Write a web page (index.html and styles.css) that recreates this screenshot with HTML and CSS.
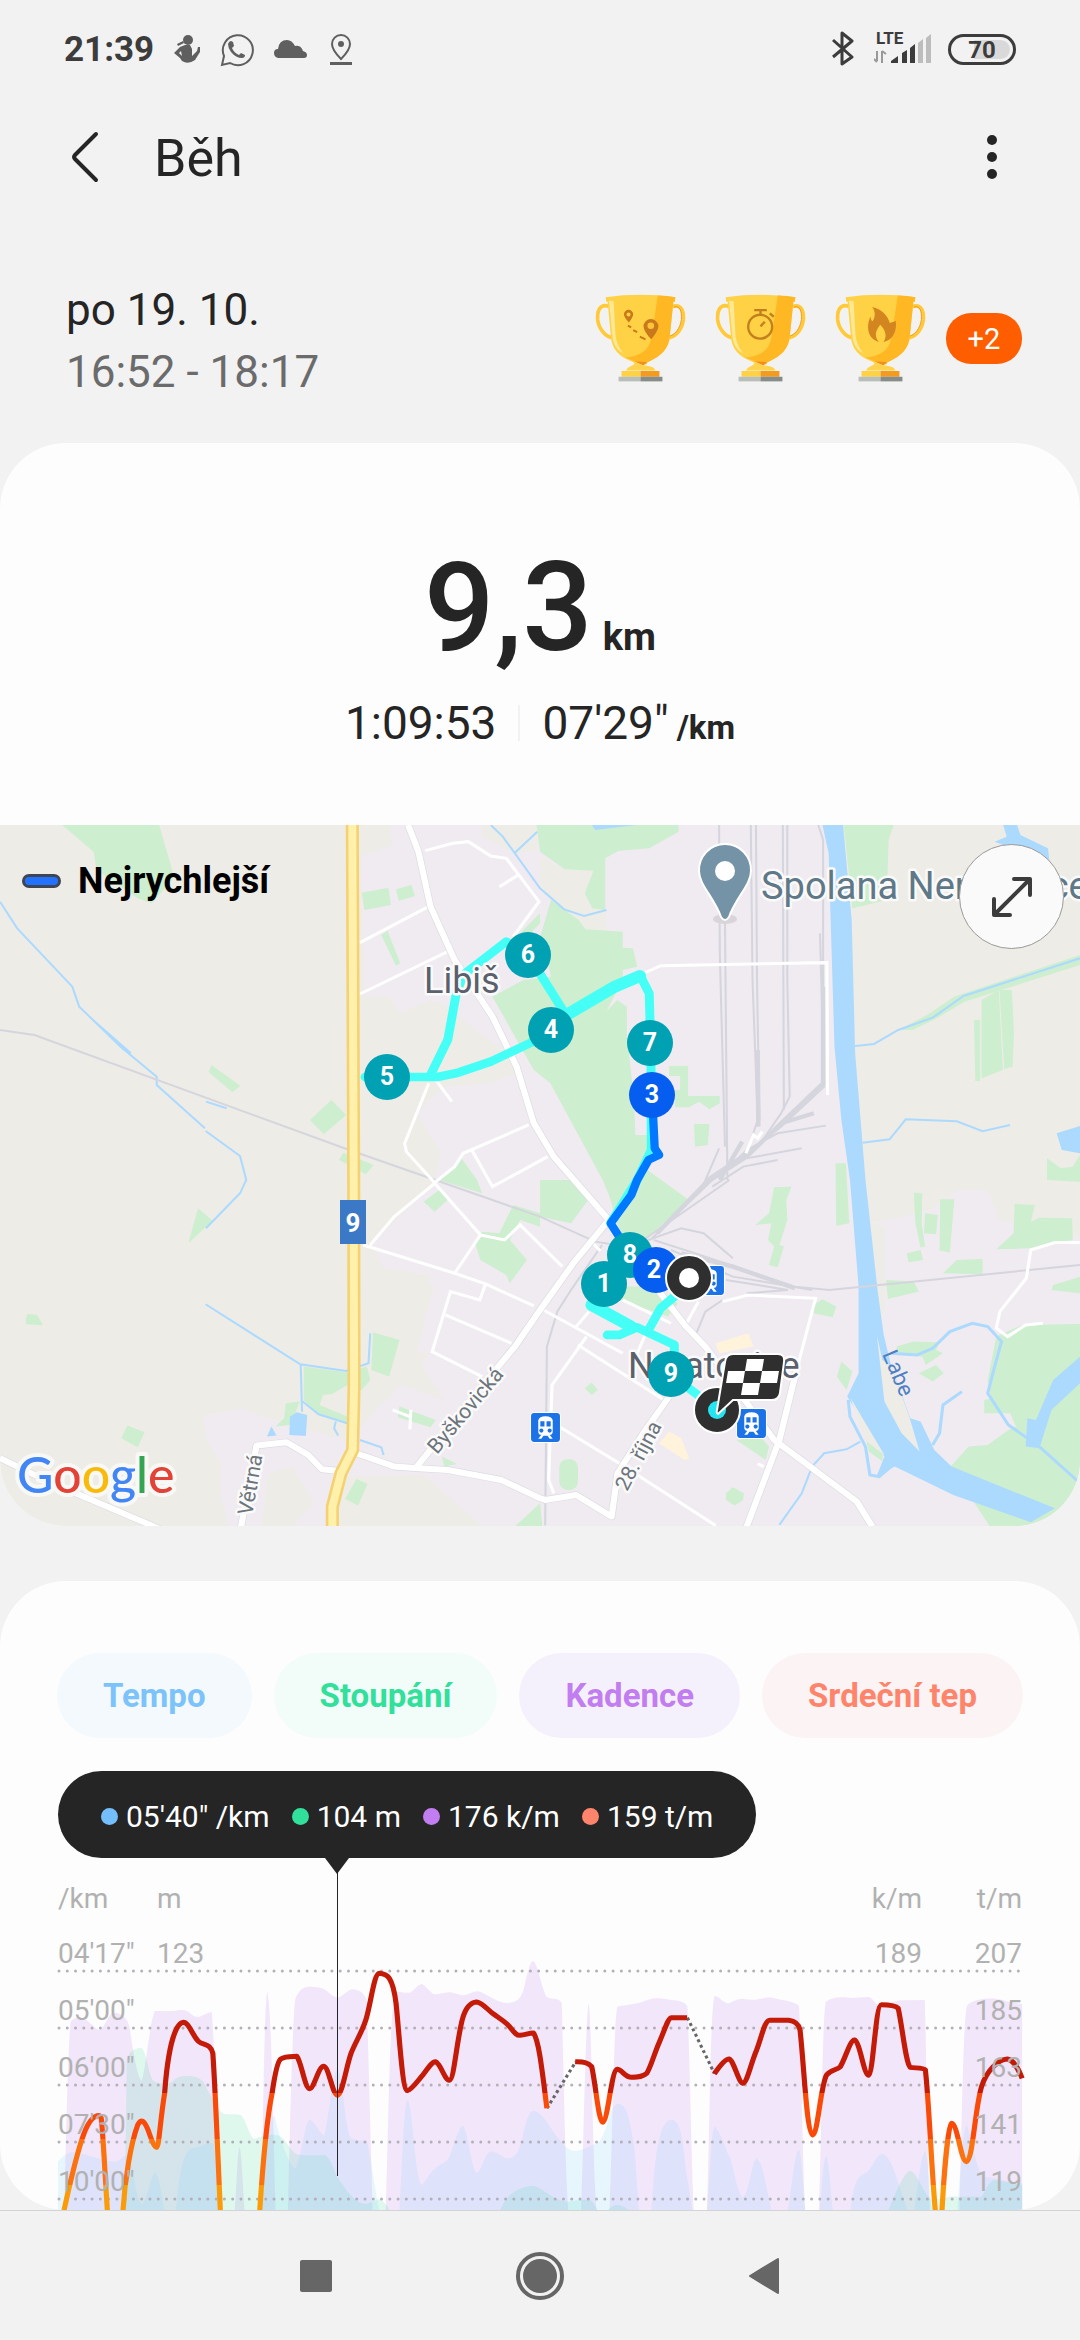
FILE: index.html
```html
<!DOCTYPE html>
<html lang="cs">
<head>
<meta charset="utf-8">
<meta name="viewport" content="width=device-width, initial-scale=1">
<title>Běh</title>
<link rel="stylesheet" href="styles.css">
</head>
<body>
<svg class="defs" aria-hidden="true">
  <symbol id="cup" viewBox="46 73 274 264">
    <path d="M88 110C62 100 52 122 54 150C58 180 78 200 98 204M280 110C304 102 314 122 312 150C308 180 290 200 270 204" fill="none" stroke="#ffc939" stroke-width="11"/>
    <path d="M284 112C302 106 308 125 306 150C302 176 288 194 272 199" fill="none" stroke="#f39a20" stroke-width="3"/>
    <path d="M78 82Q183 68 288 82L286 96H282L270 210C262 250 228 266 204 278L200 284H166L162 278C130 264 102 250 95 210L84 96H80Z" fill="#ffd145"/>
    <path d="M235 77Q265 78 288 82L286 96H282L270 210C262 250 228 266 204 278L200 284H183L166 276L138 264C190 258 212 240 218 190Z" fill="#ffb724"/>
    <path d="M88 92L102 94L108 200C112 225 122 240 132 252C112 242 102 225 99 205Z" fill="#ffe894"/>
    <path d="M166 276L202 277L190 290Z" fill="#f08f1f"/>
    <path d="M166 276C172 288 142 290 140 303H228C226 290 208 290 190 286Z" fill="#ffd34d"/>
    <path d="M126 304H183V322H126Z" fill="#ffd145"/><path d="M183 304H240V322H183Z" fill="#f39a20"/>
    <path d="M117 322H183V336H117Z" fill="#b8bfba"/><path d="M183 322H249V336H183Z" fill="#868c88"/>
  </symbol>
  <symbol id="train" viewBox="0 0 30 30">
    <rect x="0" y="0" width="30" height="30" rx="4" fill="#fff"/>
    <rect x="1" y="1" width="28" height="28" rx="3" fill="#1c73e8"/>
    <path d="M8 8Q9 4 15 4Q21 4 22 8V19Q22 22 19 22L22 26H19L17 23H13L11 26H8L11 22Q8 22 8 19Z" fill="#fff"/>
    <path d="M10 9H14V14H10ZM16 9H20V14H16Z" fill="#1c73e8"/>
    <circle cx="11" cy="18" r="2" fill="#1c73e8"/><circle cx="19" cy="18" r="2" fill="#1c73e8"/>
  </symbol>
</svg>

<header class="status">
  <div class="status-side">
    <span class="clock">21:39</span>
    <svg class="s-run" width="26" height="30" viewBox="0 0 26 30" fill="#5f5f5f"><circle cx="14" cy="6" r="5"/><path d="M9 7L3 10L4 12L10 9ZM11 11H16L18 15V22L23 17L24 13H26V18L21 26Q14 31 8 27L6 24L0 19L6 13Z"/><path d="M7 17L5 19L8 22Z" fill="#f2f2f2"/></svg>
    <svg class="s-wa" width="34" height="35" viewBox="0 0 34 35"><path d="M2 33L4 24A15 15 0 1 1 10 31Z" fill="none" stroke="#5f5f5f" stroke-width="2"/><path d="M8 12Q9 9 11 9L13 10L14 14L12 16Q14 21 19 23L21 21L25 23Q25 26 22 26Q16 26 11 20Q8 16 8 12Z" fill="#5f5f5f"/></svg>
    <svg class="s-cloud" width="34" height="20" viewBox="0 0 34 20"><path d="M4 19Q0 18 0 14Q0 10 4 10Q5 1 13 1Q18 1 21 7Q27 6 29 12Q33 13 33 16Q33 19 30 19Z" fill="#5f5f5f"/></svg>
    <svg class="s-pin" width="22" height="31" viewBox="0 0 22 31"><path d="M11 25C4 18 2 14 2 10A9 9 0 0 1 20 10C20 14 18 18 11 25Z" fill="none" stroke="#5f5f5f" stroke-width="2"/><circle cx="11" cy="10" r="3" fill="#5f5f5f"/><path d="M0 28H22V31H0Z" fill="#5f5f5f"/></svg>
  </div>
  <div class="status-side">
    <svg width="22" height="36" viewBox="0 0 22 36"><path d="M1 9L20 26L10 33V2L20 10L1 26" fill="none" stroke="#3c3c3c" stroke-width="3" stroke-linejoin="round"/></svg>
    <svg class="s-signal" width="58" height="40" viewBox="0 -4 58 40"><text x="2" y="13" font-size="17" font-weight="700" fill="#3c3c3c">LTE</text><path d="M3 20V30M0 28L3 31M8 20V32M8 20L12 23" stroke="#999" stroke-width="2" fill="none"/><path d="M17 32V30L24 25V32ZM28 32V22L33 19V32ZM36 32V17L41 13V32Z" fill="#3c3c3c"/><path d="M44 32V12L49 8V32ZM52 32V7L57 3V32Z" fill="#bdbdbd"/></svg>
    <span class="battery">70</span>
  </div>
</header>

<div class="appbar">
  <button class="icon-btn back" aria-label="Zpět"><svg width="30" height="54" viewBox="0 0 30 54"><path d="M26 4L5 25Q3 27 5 29L26 50" fill="none" stroke="#252525" stroke-width="4" stroke-linecap="round"/></svg></button>
  <h1>Běh</h1>
  <button class="icon-btn" aria-label="Další možnosti"><svg width="12" height="46" viewBox="0 0 12 46" fill="#252525"><circle cx="6" cy="6" r="5"/><circle cx="6" cy="23" r="5"/><circle cx="6" cy="40" r="5"/></svg></button>
</div>

<main>
  <section class="summary">
    <div class="when"><p>po 19. 10.</p><p class="hours">16:52 - 18:17</p></div>
    <div class="awards">
      <div class="cups">
        <svg class="cup" viewBox="46 73 274 264"><use href="#cup" x="46" y="73" width="274" height="264"/><path d="M147 120A14 14 0 0 1 161 134Q160 143 148 158Q134 143 133 134A14 14 0 0 1 147 120ZM214 148A23 23 0 0 1 237 170Q236 184 215 209Q193 184 192 170A23 23 0 0 1 214 148Z" fill="#c87a1a"/><circle cx="147" cy="134" r="6" fill="#ffd145"/><circle cx="214" cy="168" r="10" fill="#ffc43a"/><path d="M145 168L155 173M161 181L173 187M181 201L198 209" stroke="#c87a1a" stroke-width="6"/></svg>
        <svg class="cup" viewBox="46 73 274 264"><use href="#cup" x="46" y="73" width="274" height="264"/><g fill="none" stroke="#c27f1b" stroke-width="7"><circle cx="182" cy="171" r="36"/><path d="M164 121H202M183 122V134M211 131L223 141M183 170L196 156"/></g></svg>
        <svg class="cup" viewBox="46 73 274 264"><use href="#cup" x="46" y="73" width="274" height="264"/><path d="M158 112C186 118 205 138 211 160L229 154C232 180 225 210 192 217C204 200 198 180 182 165C170 180 162 198 178 216C150 210 136 178 153 140C154 150 156 154 160 154C168 140 168 126 158 112Z" fill="#d3851f"/></svg>
      </div>
      <span class="more">+2</span>
    </div>
  </section>

  <section class="card">
    <div class="metrics">
      <p class="distance"><span class="value">9,3</span><span class="unit">km</span></p>
      <p class="times"><span>1:09:53</span><span class="sep"></span><span class="pace">07'29"<span class="per">/km</span></span></p>
    </div>
    <div class="map">
      <svg class="map-art" viewBox="0 0 1080 701">
        <rect width="1080" height="701" fill="#eeece6"/>
        <g transform="translate(0 -5) scale(.3444 .3333)">
          <path class="urban" d="M1045 15H2400L2440 700L2480 1080L2530 1210L2700 1170L2780 1110H2870L2900 1200L3136 1250V2160H670L640 2020V1930L600 1860L590 1790L700 1765L820 1810L1010 1860L1250 1600L1210 1600L1260 1400L1110 1340L1080 1270Z"/>
          <path class="land" d="M1045 15H1130L1140 75L1045 110ZM1045 530H1130L1160 580L1250 540L1300 560L1390 640L1480 700L1500 760L1420 790L1290 800L1210 880L1280 1000L1262 1088L1080 1270L1045 1280ZM1045 1280L1110 1345L1250 1365L1210 1600L1240 1660L1290 1740L1180 1700L1080 1670L1045 1660ZM990 1970L1230 1965L1400 2120H960ZM850 1940L910 2050L850 2120H760L780 1960ZM1568 110L1640 148L1723 152L1698 220L1720 265L1760 270V330H1700L1568 200ZM1400 15H1560V90L1500 100L1400 50ZM2500 1200L2570 1220V1450L2560 1500L2500 1400Z"/>
          <g class="park">
            <path d="M180 15H462L500 150V180L440 250L400 235L280 150L272 95ZM1050 218L1128 203L1135 255L1058 270ZM1150 208L1195 195L1205 228L1158 243ZM1107 345L1125 332L1162 430L1150 437ZM614 735L698 797L675 817L606 757ZM900 900L962 840L1005 885L940 943ZM997 998L1085 1035L1062 1063L985 1020Z"/>
            <path d="M1558 15H1970V35L1885 85L1795 93L1757 115V270L1720 265L1698 220L1723 152L1640 148L1568 95ZM1510 340L1568 280V310L1530 350Z"/>
            <path d="M1430 530L1520 480L1600 470L1570 345L1600 240L1680 300L1700 328L1808 335V383L1838 385L1850 440L1808 450V480L1760 575L1792 540L1820 560V640L1840 830L1845 945H1880V1050L2000 1140L1870 1265L1800 1240L1770 1130L1750 1080L1598 790L1550 750Z"/>
            <path d="M1943 738H1998V828H2090V850L2060 868L2030 845L2000 862H1960V810H1975V768H1943ZM2015 912H2060L2055 975L2018 980ZM2450 15H2595L2580 60L2575 240L2475 265ZM2610 630L2700 580L2770 530L3136 405V435L2800 545L2720 595L2650 630ZM2850 540L2900 510L2912 750L2850 775ZM2828 600H2846V783H2832ZM2902 510H2938L2944 640L2940 740L2916 748ZM3040 1015L3080 1045L3115 1040L3136 1005V1085L3040 1080ZM2426 1030H2456L2466 1210L2428 1217Z"/>
            <path d="M2248 1102L2298 1100L2283 1140L2286 1200L2263 1275L2276 1280L2258 1342L2233 1335L2248 1280L2230 1260L2240 1210L2193 1215L2233 1180ZM2653 1118L2678 1120L2676 1210L2686 1280L2673 1283L2658 1210ZM2730 1138H2771L2758 1298L2728 1292ZM2686 1180L2723 1185L2718 1243L2683 1240ZM2633 1300L2673 1290L2680 1320L2638 1327ZM2946 1152L3005 1155L2993 1205L3018 1193L3113 1195L3115 1260L3048 1270L2993 1285L2893 1288L2943 1240ZM2738 1360L2778 1320L2853 1317V1363ZM2573 1380L2653 1385L2668 1415L2578 1437ZM3136 1370L3058 1395L3053 1410L3136 1420Z"/>
            <path d="M2893 1550L2968 1515L3136 1512V2160H2900L2760 1940L2813 1880L2868 1875L2928 1830L2950 1820L2933 1780H2858V1740L2878 1735L2868 1680ZM2603 1580L2653 1565L2728 1568L2718 1590L2738 1600L2688 1635L2678 1610L2608 1605ZM2668 1660L2718 1635L2740 1660L2708 1685ZM2443 1625L2475 1655L2458 1710L2430 1670ZM2513 1855L2543 1865L2563 1900V1925L2523 1895ZM2363 1455L2388 1438L2428 1460L2418 1492L2363 1480ZM1698 1705L1718 1688L1736 1710L1718 1725ZM2108 2020L2128 2002L2160 2020L2158 2040L2133 2057L2108 2040ZM2138 1860L2208 1850L2233 1880L2223 1920ZM1568 1080H1658L1708 1140L1658 1210L1568 1190ZM1750 1400H1900L1968 1450L1940 1490L1800 1440Z"/>
            <rect x="1624" y="1918" width="54" height="92" rx="24"/>
            <path d="M548 1265L575 1165L617 1202L550 1267ZM75 1495L80 1482L108 1485L125 1516L75 1513ZM352 1855L370 1817L420 1837L400 1882ZM882 1640L1008 1658L1065 1640L1075 1680L1050 1710L1008 1695L965 1722L938 1725L928 1755L1008 1790V1810L920 1780L882 1740ZM830 1750L870 1745L850 1800L840 1815L800 1820L825 1795ZM1083 1537L1160 1560L1130 1670L1078 1650ZM1160 1760L1265 1800L1250 1822L1155 1792ZM1035 1977L1067 1992L1040 2057L1002 2037ZM1230 1145L1275 1110L1305 1135L1262 1175ZM1380 1270L1400 1235L1450 1240L1490 1155L1568 1180V1220L1510 1200L1480 1260L1530 1320L1480 1390L1470 1365L1395 1320ZM1275 1080L1340 1015L1385 1080L1400 1120ZM1568 2050L1495 2120H1575ZM1283 1910L1327 1932L1290 1940Z"/>
          </g>
          <g class="water-fill">
            <path d="M2388 15L2406 100L2423 680L2443 900L2468 1080L2493 1400V1660L2460 1730L2568 1910L2545 1970L2598 1940L2768 2025L2993 2107L3063 2065L2763 1940L2713 1890L2673 1805L2643 1795L2610 1700L2588 1640L2566 1545L2548 1410L2513 1080L2483 700L2473 300L2448 15Z"/>
            <path d="M3136 1610L3058 1680L3008 1800L2983 1795L2978 1880L3018 1885L3053 1770L3136 1690ZM3068 940L3136 918V1000L3083 990ZM2913 15H2953L2963 45L3043 85L3048 130L2888 65L2923 50ZM1718 15H1848L1728 30ZM862 1777L892 1785L888 1848L840 1845L842 1790ZM788 1820L803 1847L775 1850Z"/>
          </g>
          <path class="land" d="M2546 1545L2562 1620L2588 1640L2640 1790L2670 1895L2618 1840L2568 1745ZM2470 1735L2568 1905L2510 1860Z"/>
          <g class="water">
            <path d="M0 245L50 325L210 500L230 560L350 680L455 770V795L595 925M597 933L697 1008L715 1080L697 1120L598 1225M270 600L380 700M1425 15L1460 50L1568 205L1638 268L1696 288L1761 270M1495 98L1560 35M598 845L658 865M597 1453L872 1633L1005 1653L1070 1630L1075 1540M873 1633L877 1775M877 1743L925 1783L1008 1810M975 1805L970 1825L982 1847M1045 1860L1107 1882L1114 1905M2483 678L2538 672L2608 630L2708 593L2798 528L3136 415M2505 968L2583 958L2630 898L2778 904L2853 934L2933 915M2498 1865L2458 1888L2393 1900L2358 1940L2328 2020L2263 2115"/>
            <path d="M2588 1600L2663 1605L2708 1585L2758 1535L2823 1510L2868 1520L2908 1565L2888 1640L2868 1720L2928 1815L3018 1880L3136 1990M2463 1740L2468 1790L2513 1880L2526 1965L2553 1970L2598 1930M2793 1715L2738 1755L2728 1840L2708 1875" stroke-width="9"/>
          </g>
          <g class="rail">
            <path d="M0 630L100 645L1000 985L1568 1190L1728 1265L1850 1285M2088 15L2090 400L2105 980M2105 300L2112 1080M2180 15L2185 480L2200 900L2168 1000M2195 15L2198 480L2205 900M2273 15L2276 870M2286 15V480L2293 830L2268 880L2208 970L2048 1080M2376 15L2390 60V790M2381 340L2393 800L2268 920L2068 1080L1888 1260M2398 917L2258 940L2168 990L2098 1060M2328 985L2168 1015M2258 1020L2158 1040L2068 1100M2088 985L2040 1100M2118 1080L1868 1260M1828 1280L1978 1225L2043 1240L2128 1315M1898 1260L2048 1310L2308 1400L2408 1410L3136 1335M1948 1290L2128 1370L2358 1410M2108 1380L2288 1410L2168 1420M1748 1275L1658 1410L1618 1475L1588 1580L1583 2117M2098 1440L2048 1475L2018 1550"/>
            <path d="M2200 690L2202 920M2390 500V790L2268 910L2168 1010L2048 1090L1908 1240M2155 965L2090 1080M2363 880L2268 910M1978 1300L2128 1340L2308 1405" stroke-width="13"/>
          </g>
          <path d="M2078 1570L2173 1540L2188 1580L2088 1600ZM1913 1870L1943 1835L1978 1855L2001 1915L1988 1920Z" fill="#fff3dc"/>
          <g class="street">
            <path d="M1235 92L1315 70L1360 65L1425 108L1470 115L1565 245L1490 350M1450 200L1505 165M1045 368L1240 262M1045 522L1300 395M1245 790L1175 970L1180 995L1262 1088L1320 1040L1345 1000L1535 915M1262 775L1312 845M1370 990L1430 1100L1590 1010M1262 1090L1145 1190L1075 1275M1055 1275L1320 1360L1410 1392L1550 1458M1262 1090L1395 1245L1320 1360M1395 1245L1465 1260L1510 1215L1633 1340M1410 1392L1393 1440L1308 1415L1255 1595L1400 1670M1293 1485L1485 1570M1140 1770L1190 1790M1193 1770L1190 1828M1858 465L1918 437L2401 428L2403 825M2213 935L2200 955L2188 945L2166 1000M1718 1265L1743 1293M1578 1470L1808 1600M1710 1475L1673 1520M1703 1550L1603 1695L1593 1980L1608 2020M1678 1575L1928 1740M1568 1785L1798 1930L2078 2117M1808 1440L1948 1510M2028 1445L1988 1520M1850 1600L1880 1530M2098 1445L2173 1425L2368 1435L2308 1670M3136 1268H3063L2993 1290L2980 1375L2903 1475L2893 1525L2926 1550L2978 1515L3028 1510M2200 1932L2218 1940"/>
          </g>
          <g class="road-edge"><path id="r1" d="M1185 15L1215 95L1250 260L1320 420L1430 590L1500 740L1550 910L1608 1010L1768 1200L1818 1280L1918 1420L1988 1515L2048 1580L2248 1860L2488 2045L2533 2120M1768 1200L1668 1325L1568 1470L1495 1580L1430 1660L1210 1940M1943 1730L1868 1840L1793 1960L1776 2090L1673 2025L1583 2040L1568 2035L1455 1980L1300 1950L1215 1945L1145 1940L1035 1900M2313 1650L2263 1860L2168 2120M985 1953L935 1948L895 1905L832 1867L745 1877L735 1930L700 2120M0 1915L130 1980L470 2130"/></g>
          <use href="#r1" class="road"/>
          <path d="M1023 15L1027 1080L1028 1700L1024 1890L990 1960L965 2060V2120" fill="none" stroke="#f5d171" stroke-width="38"/>
          <path d="M1023 15L1027 1080L1028 1700L1024 1890L990 1960L965 2060V2120" fill="none" stroke="#fff1ac" stroke-width="23"/>
          <g fill="none" stroke="#45fff6" stroke-width="26" stroke-linejoin="round" stroke-linecap="round">
            <path d="M1060 771H1270L1330 758L1425 725L1568 655L1600 630M1858 465L1885 520L1890 700L1891 990L1850 1080L1773 1210M1250 765L1300 660L1325 520L1345 465L1470 365L1534 405L1640 580M1763 1545L1798 1545L1850 1522L1958 1575V1640M1883 1530L1918 1465L1958 1430M1968 1680L2083 1770"/>
            <path d="M1645 585L1785 500L1858 468M1718 1455L1833 1520" stroke-width="36"/>
          </g>
          <path d="M1896 880L1901 985L1914 1005L1883 1020L1850 1080L1833 1125L1773 1210L1810 1270" fill="none" stroke="#0078ff" stroke-width="24" stroke-linejoin="round"/>
        </g>

        <g class="place">
          <text x="424" y="168" font-size="36">Libiš</text>
          <text x="628" y="553" font-size="36">Neratovice</text>
          <text x="761" y="74" font-size="38" class="poi">Spolana Neratovice</text>
          <text transform="translate(437 630) rotate(-50)" font-size="21" class="street-name">Byškovická</text>
          <text transform="translate(252 691) rotate(-80)" font-size="21" class="street-name">Větrná</text>
          <text transform="translate(627 667) rotate(-62)" font-size="21" class="street-name">28. října</text>
          <text transform="translate(882 529) rotate(67)" font-size="22" class="river">Labe</text>
        </g>
        <ellipse cx="725" cy="94" rx="12" ry="5" fill="#d8d4d9"/>
        <path d="M725 19A26 26 0 0 1 751 46C751 60 736 72 729 92Q725 98 721 92C714 72 699 60 699 46A26 26 0 0 1 725 19Z" fill="#7593a7" stroke="#fff" stroke-width="2"/>
        <circle cx="725" cy="46" r="10" fill="#fff"/>
        <rect x="340" y="375" width="26" height="44" fill="#3b78c6"/>
        <text x="353" y="407" class="shield">9</text>
        <use href="#train" x="530" y="587" width="31" height="31"/>
        <use href="#train" x="736" y="583" width="31" height="31"/>
        <use href="#train" x="694" y="440" width="31" height="31"/>
        <g class="pin">
          <circle cx="387" cy="252" r="23"/><text x="387" y="260">5</text>
          <circle cx="528" cy="130" r="23"/><text x="528" y="138">6</text>
          <circle cx="551" cy="205" r="23"/><text x="551" y="213">4</text>
          <circle cx="650" cy="218" r="23"/><text x="650" y="226">7</text>
          <circle cx="652" cy="270" r="23" class="fast"/><text x="652" y="278">3</text>
          <circle cx="630" cy="430" r="23"/><text x="630" y="438">8</text>
          <circle cx="604" cy="459" r="23"/><text x="604" y="467">1</text>
          <circle cx="656" cy="445" r="23" class="fast"/><text x="654" y="453">2</text>
          <circle cx="671" cy="549" r="23"/><text x="671" y="557">9</text>
        </g>
        <circle cx="689" cy="453" r="23" fill="#2f2f2f" stroke="#fff" stroke-width="2"/><circle cx="689" cy="453" r="10" fill="#fff"/>
        <circle cx="717" cy="585" r="23" fill="#2f2f2f" stroke="#fff" stroke-width="2"/><circle cx="717" cy="585" r="9" fill="#25e6f0"/>
        <path d="M733 529H778Q785 529 784 537L780 568Q779 575 772 575H733L718 589Q716 588 717 585L725 537Q726 529 733 529Z" fill="#2f2f2f" stroke="#fff" stroke-width="2"/>
        <path d="M747 534L764 534L762 546L745 546ZM728 546L745 546L743 558L726 558ZM762 546L779 546L777 558L760 558ZM743 558L760 558L758 570L741 570Z" fill="#fff"/>
        <text x="17" y="668" class="logo"><tspan fill="#4285f4">G</tspan><tspan fill="#e24336">o</tspan><tspan fill="#f8bb0c">o</tspan><tspan fill="#4285f4">g</tspan><tspan fill="#35a553">l</tspan><tspan fill="#e24336">e</tspan></text>
      </svg>
      <p class="legend"><span class="swatch"></span>Nejrychlejší</p>
      <button class="expand" aria-label="Zvětšit mapu"><svg width="44" height="44" viewBox="0 0 44 44"><path d="M5 39L39 5M24 4H40V20M4 24V40H20" fill="none" stroke="#3c3c3c" stroke-width="4" stroke-linecap="round" stroke-linejoin="round"/></svg></button>
    </div>
  </section>

  <section class="card charts">
    <div class="tabs">
      <button class="tab pace-tab">Tempo</button>
      <button class="tab climb-tab">Stoupání</button>
      <button class="tab cadence-tab">Kadence</button>
      <button class="tab heart-tab">Srdeční tep</button>
    </div>
    <div class="tip">
      <span class="reading pace-dot">05'40" /km</span>
      <span class="reading climb-dot">104 m</span>
      <span class="reading cadence-dot">176 k/m</span>
      <span class="reading heart-dot">159 t/m</span>
    </div>
    <svg class="chart" viewBox="0 0 1080 352">
      <defs>
        <linearGradient id="zone" gradientUnits="userSpaceOnUse" x1="0" y1="0" x2="0" y2="1050">
          <stop offset=".665" stop-color="#c41a08"/><stop offset=".665" stop-color="#f94a0a"/>
          <stop offset=".798" stop-color="#f94a0a"/><stop offset=".798" stop-color="#fb720f"/>
          <stop offset=".93" stop-color="#fb720f"/><stop offset=".93" stop-color="#fb9b08"/>
        </linearGradient>
      </defs>
      <g transform="translate(0 2) scale(.3444 .3333)">
        <path fill="#c27df0" fill-opacity=".18" d="M187 1050C192 800 198 560 205 485C215 470 235 470 250 480C270 495 280 510 290 510C305 500 315 460 330 458C350 458 368 470 376 500C385 560 395 640 411 663C425 620 435 480 450 453H500C530 448 540 448 550 458C565 472 575 475 590 465L615 455C625 600 633 900 645 1050ZM682 1050C687 980 690 862 696 862C702 880 705 980 710 1050ZM760 1050C763 800 768 420 776 395C785 430 790 600 800 1050ZM836 1050C842 800 850 450 858 415C870 385 885 380 900 380C920 380 935 382 945 390C960 402 970 413 982 413C1000 405 1010 388 1025 388C1040 390 1055 395 1065 420C1070 600 1078 900 1082 1050ZM1120 1050C1127 850 1130 450 1148 395C1165 395 1175 400 1190 398C1205 390 1215 372 1225 372C1240 378 1250 403 1265 403C1285 400 1300 395 1310 397C1325 400 1335 406 1345 406C1360 405 1370 395 1387 394C1410 398 1440 428 1472 429C1500 427 1510 420 1520 390C1530 350 1538 303 1548 303C1562 310 1575 395 1588 412C1605 420 1620 412 1631 428C1636 600 1640 900 1650 1050ZM1687 1050C1695 850 1700 480 1709 428C1718 470 1720 900 1732 1050ZM1770 1050C1778 850 1782 500 1792 440C1830 433 1850 432 1880 420C1915 410 1930 418 1950 420C1970 422 1990 425 1996 440C2003 600 2008 900 2014 1050ZM2053 1050C2060 850 2062 440 2075 407C2090 410 2100 430 2117 430C2135 422 2145 415 2160 417C2200 425 2220 410 2240 413C2270 420 2310 425 2320 437C2328 600 2330 900 2338 1050ZM2378 1050C2385 850 2388 460 2398 425C2420 410 2440 410 2475 414L2522 411C2535 412 2540 435 2555 437C2580 435 2590 422 2620 421L2685 420C2690 550 2692 900 2700 1050ZM2786 1050C2792 850 2796 470 2808 437C2820 420 2860 415 2890 416C2920 420 2940 430 2968 432V1050Z"/>
        <path fill="#31e09b" fill-opacity=".15" d="M362 1050L368 600C375 575 390 564 408 563C425 566 430 640 445 662C460 672 485 672 500 665C510 655 520 648 540 648C565 648 575 650 590 665C610 700 630 750 650 762C670 765 685 760 700 766C715 780 725 835 740 837C770 825 790 822 810 827C830 835 840 870 860 882C880 890 920 885 945 886C965 900 970 940 985 960C1010 995 1030 1032 1065 1032C1085 1025 1095 1015 1107 1020C1120 1030 1128 1045 1131 1050ZM1453 1050C1470 1000 1510 980 1548 977C1580 985 1610 1025 1650 1025C1680 1020 1710 1015 1720 1025L1735 1050ZM1765 1050C1785 1030 1800 1030 1825 1050ZM2580 1050C2600 1000 2625 935 2643 932C2665 940 2680 1000 2705 1018C2730 1022 2750 1005 2780 1010H2850C2865 990 2870 962 2890 960L2968 975V1050Z"/>
        <path fill="#74ccff" fill-opacity=".16" d="M168 1050V905C190 880 205 873 225 878C260 885 300 905 340 905C360 895 370 860 385 930C395 1000 405 1032 413 1032C430 1015 440 935 452 937C465 960 470 1020 478 1050ZM511 1050C520 950 530 870 560 865C590 860 590 848 620 850C628 900 635 1000 640 1050ZM755 1050C765 900 780 780 797 765C810 830 840 920 858 925C875 900 885 780 900 780C915 785 930 825 942 826C955 780 965 640 980 625C995 640 1000 800 1018 835C1035 843 1050 840 1065 845C1078 900 1090 1000 1102 1050ZM1160 1050C1168 950 1172 720 1184 720C1198 740 1205 960 1225 975C1240 960 1245 940 1265 925C1285 905 1290 915 1305 890C1320 850 1333 798 1345 798C1360 820 1370 938 1386 940C1400 925 1410 875 1428 874C1445 876 1460 895 1475 896C1500 893 1510 870 1520 820C1530 770 1540 752 1550 752C1580 760 1600 810 1625 840C1645 865 1655 873 1672 873C1700 868 1720 855 1740 845C1765 815 1770 732 1795 732C1825 732 1830 800 1840 850C1848 920 1850 1000 1855 1050ZM1892 1050C1900 950 1905 780 1950 779C1985 780 1985 900 1995 950L2010 1050ZM2053 1050C2062 950 2065 800 2076 800C2100 830 2105 870 2120 895C2135 950 2145 1010 2158 1012C2175 1000 2185 895 2197 895C2215 910 2220 960 2240 1050ZM2288 1050C2300 980 2308 870 2320 870C2330 900 2332 1000 2338 1050ZM2380 1050C2388 980 2390 890 2400 888C2408 920 2412 1000 2418 1050ZM2470 1050C2480 960 2490 950 2518 937C2535 920 2545 882 2562 882C2590 890 2600 950 2635 1050ZM2655 1050C2665 980 2675 880 2687 872C2697 920 2700 1000 2705 1050ZM2780 1050C2790 900 2798 800 2808 797C2825 850 2835 940 2860 950C2900 955 2920 965 2968 970V1050Z"/>
      </g>
      <g class="grid"><path d="M59 113H1020M59 170H1020M59 227H1020M59 284H1020M59 341H1020"/></g>
      <g transform="translate(0 2) scale(.3444 .3333)" fill="none">
        <path d="M1588 745L1672 605M1996 473L2074 640" stroke="#666" stroke-width="9" stroke-dasharray="9 9"/>
        <path stroke="url(#zone)" stroke-width="15" stroke-linejoin="round" d="M185 1055C205 960 235 830 255 795C270 768 290 758 294 775C300 830 305 950 312 1055M357 1055C362 960 380 850 400 795C410 775 418 780 430 810C440 840 448 862 455 862C462 860 465 780 478 700C485 600 500 510 525 490C545 475 555 520 575 543C590 558 610 548 618 580C625 680 633 900 640 1055M754 1055C760 960 770 800 790 700C797 650 805 605 815 597C830 587 850 590 862 589C875 605 885 685 899 686C912 686 925 618 940 619C955 620 965 705 980 706C995 700 1005 620 1020 578C1035 540 1055 510 1065 470C1080 410 1087 340 1102 340C1125 342 1140 350 1150 430C1160 530 1168 690 1183 692C1195 690 1215 660 1228 645C1245 620 1255 605 1264 605C1280 610 1290 660 1305 661C1318 660 1325 550 1342 480C1352 440 1370 427 1384 426C1400 428 1415 448 1430 460C1450 475 1460 480 1473 493C1490 510 1495 526 1510 526C1525 525 1535 519 1549 519C1565 540 1575 640 1588 745M1670 605C1690 606 1705 605 1718 620C1728 660 1738 787 1750 787C1765 785 1775 630 1792 628C1805 628 1815 652 1833 652C1855 651 1868 650 1878 640C1890 620 1900 580 1915 545C1930 510 1940 473 1950 473H1995M2074 642C2085 625 2105 597 2117 597C2130 600 2145 670 2157 670C2170 668 2180 610 2197 570C2212 530 2220 481 2235 481H2290C2305 483 2318 488 2323 510C2335 620 2342 820 2360 825C2375 820 2382 680 2400 645C2412 630 2430 630 2440 620C2455 595 2468 540 2481 540C2497 545 2508 645 2522 646C2536 640 2542 434 2559 434C2575 434 2600 435 2608 445C2620 500 2630 610 2643 622C2655 625 2680 622 2687 630C2697 720 2705 930 2716 1055M2735 1055C2740 960 2752 800 2763 790C2780 790 2790 905 2806 905C2825 900 2830 750 2850 680C2865 630 2900 598 2925 597C2945 600 2958 630 2968 655"/>
      </g>
      <path d="M325 0H349L337 16Z" fill="#252525"/><rect x="337" y="14" width="1" height="304" fill="#252525"/>
      <g class="axis">
        <text x="58" y="50">/km</text><text x="58" y="105">04'17"</text><text x="58" y="162">05'00"</text><text x="58" y="219">06'00"</text><text x="58" y="276">07'30"</text><text x="58" y="333">10'00"</text>
        <text x="157" y="50">m</text><text x="157" y="105">123</text>
        <g text-anchor="end"><text x="922" y="50">k/m</text><text x="922" y="105">189</text>
        <text x="1022" y="50">t/m</text><text x="1022" y="105">207</text><text x="1022" y="162">185</text><text x="1022" y="219">163</text><text x="1022" y="276">141</text><text x="1022" y="333">119</text></g>
      </g>
    </svg>
  </section>
</main>

<nav class="sysnav">
  <button aria-label="Poslední aplikace"><svg width="32" height="32" viewBox="0 0 32 32"><rect width="32" height="32" rx="2" fill="#666"/></svg></button>
  <button aria-label="Domů"><svg width="50" height="50" viewBox="0 0 50 50"><circle cx="25" cy="25" r="22" fill="none" stroke="#666" stroke-width="4"/><circle cx="25" cy="25" r="17" fill="#666"/></svg></button>
  <button aria-label="Zpět"><svg width="32" height="38" viewBox="0 0 32 38"><path d="M30 2V36L2 19Z" fill="#666" stroke="#666" stroke-width="2" stroke-linejoin="round"/></svg></button>
</nav>
</body>
</html>
```
FILE: styles.css
```css
* { box-sizing: border-box; }
body {
  margin: 0;
  min-height: 100vh;
  display: flex;
  flex-direction: column;
  background: #f2f2f2;
  color: #252525;
  font-family: Roboto, sans-serif;
}
main { flex: 1; }
p, h1 { margin: 0; }
button {
  border: 0;
  padding: 0;
  background: none;
  font: inherit;
  color: inherit;
}
svg { display: block; }
.defs { position: absolute; width: 0; height: 0; }

.status {
  display: flex;
  justify-content: space-between;
  align-items: center;
  height: 98px;
  padding: 0 64px;
}
.status-side { display: flex; align-items: center; gap: 20px; }
.clock { font-size: 35px; font-weight: 700; color: #3c3c3c; }
.s-pin { margin-left: 2px; }
.s-signal { margin-bottom: 4px; }
.battery {
  width: 68px;
  height: 31px;
  margin-left: -4px;
  border: 3px solid #3c3c3c;
  border-radius: 16px;
  background: linear-gradient(90deg, #f2f2f2 20px, #d9d9d9 20px) content-box;
  padding: 3px;
  font-size: 24px;
  line-height: 20px;
  font-weight: 700;
  text-align: center;
  color: #3c3c3c;
}

.appbar {
  display: flex;
  align-items: center;
  height: 118px;
  padding: 0 82px 0 70px;
}
.appbar h1 { flex: 1; margin-left: 54px; padding-top: 3px; font-size: 52px; font-weight: 400; }

.summary {
  display: flex;
  justify-content: space-between;
  align-items: center;
  padding: 63px 58px 40px 66px;
  font-size: 44px;
  line-height: 62px;
}
.hours { color: #6b6b6b; }
.awards { display: flex; align-items: center; gap: 20px; padding-bottom: 6px; }
.cups { display: flex; gap: 29px; }
.cup { width: 91px; height: 88px; }
.more {
  width: 76px;
  height: 51px;
  border-radius: 25px;
  background: #ff5e00;
  color: #fff;
  font-size: 29px;
  line-height: 53px;
  text-align: center;
}

.card { background: #fdfdfd; border-radius: 66px; overflow: hidden; }
.metrics { padding: 105px 0 72px; }
.distance, .times { display: flex; justify-content: center; align-items: baseline; }
.value { font-size: 124px; line-height: 120px; font-weight: 500; }
.unit { margin-left: 10px; font-size: 38px; line-height: 40px; font-weight: 700; }
.times { margin-top: 25px; font-size: 46px; line-height: 60px; }
.sep { align-self: center; width: 2px; height: 36px; margin: 0 22px; background: #f2f2f2; }
.per { margin-left: 8px; font-size: 33px; line-height: 40px; font-weight: 700; }

.map { position: relative; }
.map-art { width: 100%; height: auto; }
.urban { fill: #f0ebf0; }
.land { fill: #eeece6; }
.park { fill: #cdeecf; }
.water-fill { fill: #acdafe; }
.water { fill: none; stroke: #acdafe; stroke-width: 6px; }
.water [stroke-width="9"] { stroke-width: 9px; }
.rail { fill: none; stroke: #d5d5de; stroke-width: 6px; }
.rail [stroke-width="13"] { stroke-width: 13px; }
.street { fill: none; stroke: #fff; stroke-width: 9px; }
.road, .road-edge { fill: none; stroke-linejoin: round; }
.road { stroke: #fff; stroke-width: 18px; }
.road-edge { stroke: #dcdce2; stroke-width: 22px; }
.place { fill: #5a606c; stroke: #fafafa; stroke-width: 5px; stroke-linejoin: round; paint-order: stroke; }
.poi { fill: #5f7888; }
.street-name { fill: #6d757c; }
.river { fill: #4d80c2; stroke: none; }
.shield { fill: #fff; font-size: 26px; font-weight: 700; text-anchor: middle; }
.pin { fill: #00a1b2; font-size: 25px; font-weight: 700; text-anchor: middle; }
.pin text { fill: #fff; }
.pin .fast { fill: #055ef0; }
.logo {
  font-family: Lato, sans-serif;
  font-size: 50px;
  font-weight: 500;
  stroke: #f8f8f6;
  stroke-width: 8px;
  stroke-linejoin: round;
  paint-order: stroke;
}
.legend {
  position: absolute;
  left: 22px;
  top: 34px;
  display: flex;
  align-items: center;
  gap: 17px;
  font-size: 36px;
  line-height: 44px;
  font-weight: 700;
  color: #000;
}
.swatch { width: 39px; height: 14px; border: 3px solid #3f4652; border-radius: 7px; background: #2272ff; }
.expand {
  position: absolute;
  right: 16px;
  top: 19px;
  width: 105px;
  height: 105px;
  border: 1px solid #999;
  border-radius: 50%;
  background: #fafafa;
  display: grid;
  place-items: center;
}

.charts { margin-top: 55px; padding-top: 72px; }
.tabs { display: flex; justify-content: space-between; padding: 0 57px; }
.tab { height: 85px; padding: 0 46px; border-radius: 43px; font-size: 33px; font-weight: 700; }
.pace-tab { color: #7cc3fb; background: #f4f9fd; }
.climb-tab { color: #31e09b; background: #f2fdf9; }
.cadence-tab { color: #c27df0; background: #f5f1fc; }
.heart-tab { color: #ff846c; background: #fcf4f4; }
.tip {
  display: flex;
  align-items: center;
  gap: 22px;
  width: max-content;
  height: 87px;
  margin: 33px 0 0 58px;
  padding: 4px 43px 0;
  border-radius: 44px;
  background: #252525;
  color: #fff;
  font-size: 30px;
}
.reading { display: flex; align-items: center; gap: 8px; }
.reading::before { content: ""; width: 17px; height: 17px; border-radius: 50%; background: currentColor; }
.pace-dot::before { background: #74bffb; }
.climb-dot::before { background: #31e09b; }
.cadence-dot::before { background: #c27df0; }
.heart-dot::before { background: #ff846c; }
.chart { width: 100%; height: auto; }
.grid { fill: none; stroke: #b3b0b8; stroke-width: 3px; stroke-linecap: round; stroke-dasharray: 0 8.27; }
.axis { fill: #b1b1b1; font-size: 28px; }

.sysnav {
  display: grid;
  grid-template-columns: repeat(3, 1fr);
  place-items: center;
  height: 130px;
  padding: 0 204px;
  border-top: 1px solid #d4d4d4;
}
```
